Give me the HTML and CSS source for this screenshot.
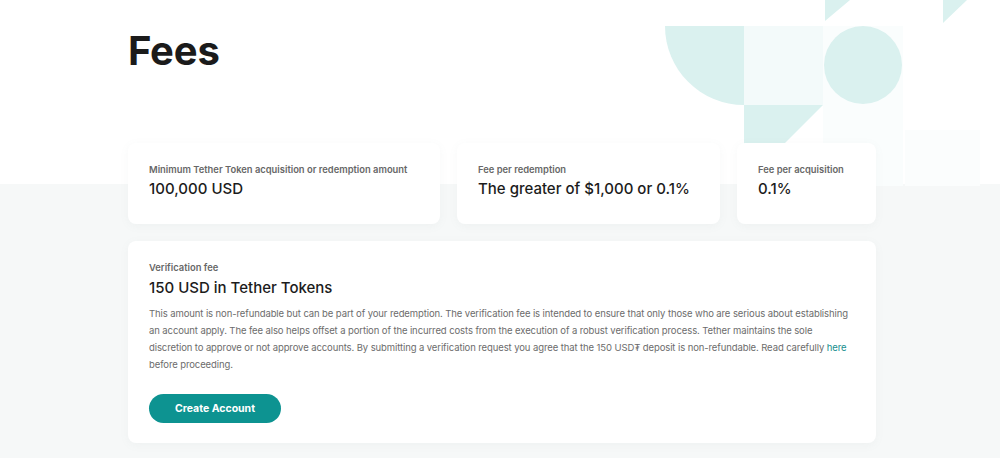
FILE: index.html
```html
<!DOCTYPE html>
<html lang="en">
<head>
<meta charset="utf-8">
<title>Fees</title>
<link rel="stylesheet" href="styles.css">
</head>
<body>
<div class="page">
  <svg class="decor" width="1000" height="190" viewBox="0 0 1000 190" aria-hidden="true">
    <rect x="744" y="26" width="79" height="79" fill="#f3fafa"/>
    <rect x="823" y="26" width="80" height="160" fill="#fafdfd"/>
    <rect x="905" y="130" width="75" height="56" fill="#fbfdfd"/>
    <path d="M665 26 L744 26 L744 105 A79 79 0 0 1 665 26 Z" fill="#daf1ef"/>
    <path d="M744 105 L823 105 L744 184 Z" fill="#daf1ef"/>
    <circle cx="863" cy="65" r="39" fill="#daf1ef"/>
    <path d="M825 0 L850 0 L825 21 Z" fill="#daf1ef"/>
    <path d="M943 0 L967 0 L943 23 Z" fill="#daf1ef"/>
  </svg>
  <main class="container">
    <h1 class="title">Fees</h1>
    <section class="stats">
      <div class="card stat">
        <div class="label">Minimum Tether Token acquisition or redemption amount</div>
        <div class="value">100,000 USD</div>
      </div>
      <div class="card stat">
        <div class="label">Fee per redemption</div>
        <div class="value">The greater of $1,000 or 0.1%</div>
      </div>
      <div class="card stat">
        <div class="label">Fee per acquisition</div>
        <div class="value">0.1%</div>
      </div>
    </section>
    <section class="card verify">
      <div class="label">Verification fee</div>
      <h2 class="heading">150 USD in Tether Tokens</h2>
      <p class="body">This amount is non-refundable but can be part of your redemption. The verification fee is intended to ensure that only those who are serious about establishing an account apply. The fee also helps offset a portion of the incurred costs from the execution of a robust verification process. Tether maintains the sole discretion to approve or not approve accounts. By submitting a verification request you agree that the 150 USD₮ deposit is non-refundable. Read carefully <a class="link" href="#">here</a> before proceeding.</p>
      <a class="btn" href="#">Create Account</a>
    </section>
  </main>
</div>
</body>
</html>
```

FILE: styles.css
```css
* { box-sizing: border-box; }
html, body { margin: 0; padding: 0; }
body {
  font-family: "Inter", "Noto Sans", sans-serif;
  background: linear-gradient(#ffffff 0, #ffffff 184px, #f6f8f8 184px);
  min-height: 458px;
  overflow: hidden;
}
.page {
  position: relative;
  width: 1000px;
  height: 458px;
}
.decor {
  position: absolute;
  left: 0;
  top: 0;
}
.container {
  position: relative;
  width: 748px;
  margin-left: 128px;
  padding-top: 31px;
}
.title {
  margin: 0;
  font-size: 40px;
  line-height: 40px;
  font-weight: 700;
  color: #1b1b1b;
  letter-spacing: -0.2px;
}
.stats {
  display: grid;
  grid-template-columns: 312px 263px 139px;
  gap: 17px;
  margin-top: 72px;
}
.card {
  background: #ffffff;
  border-radius: 8px;
  box-shadow: 0 2px 10px rgba(120, 140, 140, 0.06);
}
.stat {
  padding: 20px 12px 0 21px;
  height: 81px;
}
.label {
  font-size: 9.4px;
  line-height: 14px;
  font-weight: 600;
  color: #676767;
  white-space: nowrap;
}
.value {
  margin-top: 2px;
  font-size: 15px;
  line-height: 20px;
  font-weight: 500;
  color: #1c1c1c;
}
.verify {
  margin-top: 17px;
  padding: 20px 21px 20px 21px;
}
.heading {
  margin: 2px 0 0;
  font-size: 15px;
  line-height: 22px;
  font-weight: 500;
  color: #1c1c1c;
}
.body {
  margin: 6px 0 0;
  font-size: 9.5px;
  letter-spacing: -0.1px;
  line-height: 17px;
  color: #6c6c6c;
}
.link {
  color: #178f8f;
  text-decoration: none;
}
.btn {
  display: inline-flex;
  align-items: center;
  justify-content: center;
  margin-top: 21px;
  width: 132px;
  height: 29px;
  border-radius: 15px;
  background: #0d9391;
  color: #ffffff;
  font-size: 10.5px;
  font-weight: 700;
  text-decoration: none;
}
```
